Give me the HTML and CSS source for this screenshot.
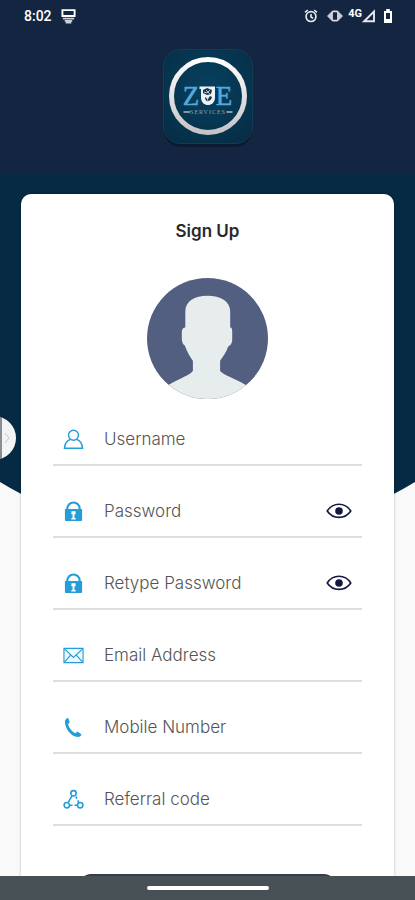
FILE: index.html
```html
<!DOCTYPE html>
<html lang="en">
<head>
<meta charset="utf-8">
<meta name="viewport" content="width=device-width, initial-scale=1">
<title>Sign Up - Zue Services</title>
<link rel="stylesheet" href="styles.css">
</head>
<body>
<svg class="sprite" aria-hidden="true">
  <symbol id="lock" viewBox="0 0 20 22">
    <path d="M3.500 9V8a6.500 6.500 0 0 1 13 0v1" fill="none" stroke="currentColor" stroke-width="2.200"/>
    <path d="M1 8.500h18V20a1 1 0 0 1-1 1H2a1 1 0 0 1-1-1z" fill="currentColor"/>
    <path d="M7.800 10.800h4.400v3h-1.200v4h1.200v1.500H7.800v-1.500H9v-4H7.800z" fill="#fff"/>
  </symbol>
  <symbol id="eye" viewBox="0 0 26 18">
    <path d="M1.200 9C7 0 19 0 24.800 9 19 17.500 7 17.500 1.200 9z" fill="none" stroke="currentColor" stroke-width="1.600" stroke-linejoin="round"/>
    <circle cx="13" cy="9" r="3.800" fill="currentColor"/>
  </symbol>
</svg>
<div class="screen">
  <div class="backdrop"></div>
  <header class="top">
    <div class="status">
      <div class="status-group">
        <span class="clock">8:02</span>
        <svg class="icon-notice" viewBox="0 0 16 16"><path d="M1.500 1.200h13v6.300h-13z" fill="none" stroke="#fff" stroke-width="2"/><path d="M2 10.200h12M4 12.700h8M5 14.500h6" stroke="#cbd0d9" stroke-width="1.800"/></svg>
      </div>
      <div class="status-group">
        <svg class="icon-alarm" viewBox="0 0 14 14"><circle cx="7" cy="7.600" r="4.900" fill="none" stroke="#e4e7ee" stroke-width="1.700"/><path d="M1 3.400 3.800 1M13 3.400 10.200 1M7 5v3l2 1.200" fill="none" stroke="#e4e7ee" stroke-width="1.600"/></svg>
        <svg class="icon-vibrate" viewBox="0 0 16 14"><path d="M4.500 2.500 0 7l4.500 4.500zM11.500 2.500 16 7l-4.500 4.500z" fill="#c7ccd6"/><rect x="5" y="2.400" width="6" height="9.200" rx="1.400" fill="#142541" stroke="#d8dce4" stroke-width="1.800"/></svg>
        <div class="signal">
          <span class="network">4G</span>
          <svg class="icon-signal" viewBox="0 0 14 14"><path d="M12 2.500V12.200H2.200z" fill="none" stroke="#e4e7ee" stroke-width="1.900"/></svg>
        </div>
        <svg class="icon-battery" viewBox="0 0 10 14"><path d="M3.200 0h3.600v2H9v12H1V2h2.200z" fill="#fff"/><path d="M3 4h4v6H3z" fill="#142541"/></svg>
      </div>
    </div>
    <svg class="logo" viewBox="0 0 92 100" role="img" aria-label="Zue Services">
      <defs>
        <radialGradient id="tile" cx=".5" cy=".4" r=".7"><stop offset="0" stop-color="#07415f"/><stop offset="1" stop-color="#062d45"/></radialGradient>
        <linearGradient id="ring" x1="0" y1="0" x2="0" y2="1"><stop offset="0" stop-color="#fff"/><stop offset="1" stop-color="#c5c3c7"/></linearGradient>
      </defs>
      <rect x="2" y="5" width="88" height="93" rx="17" fill="#0b1a31"/>
      <rect x="1.500" y=".5" width="89" height="94" rx="17" fill="url(#tile)" stroke="#123b55"/>
      <circle cx="46" cy="47" r="36.500" fill="none" stroke="url(#ring)" stroke-width="5"/>
      <g font-family="'Liberation Serif', serif" text-anchor="middle">
        <text x="29" y="55.500" font-size="27" fill="#55a8dd" stroke="#55a8dd" stroke-width=".5">Z</text>
        <text x="62" y="55.500" font-size="27" fill="#55a8dd" stroke="#55a8dd" stroke-width=".5">E</text>
        <text x="46" y="65" font-size="6" letter-spacing="1" fill="#8ba2b0">SERVICES</text>
      </g>
      <path d="M37.500 37.500H53v11c0 10-14 10-14 0V40h-1.500z" fill="#edf1f5"/>
      <path d="m41 41 4-2 5 2-1 4-4 1-4-2zM43 48c0 6 6 5 7 0l-2-1-2 3z" fill="#17334b"/>
      <path d="m42 43 3 1 3-3M44 41l4 4M45 49l1 3" stroke="#dce5ec" stroke-width=".8" fill="none"/>
      <path d="M21.500 63h6.500M64.500 63h6" stroke="#a7bac6" stroke-width="1.400"/>
    </svg>
  </header>
  <main class="card">
    <h1>Sign Up</h1>
    <svg class="avatar" viewBox="0 0 120 120" role="img" aria-label="Profile picture">
      <defs><clipPath id="round"><circle cx="60" cy="60" r="60"/></clipPath></defs>
      <g clip-path="url(#round)">
        <path d="M0 0h120v120H0z" fill="#535f80"/>
        <path d="M38 49V33c0-10 9-15.500 22-15.500S82.500 23 82.500 33v16c2 0 2 2 2 5v7c0 4-2 6-4 7-2 6-5 10-8 14v10c2 4 18 9 27 15v21H20v-21c9-6 24-11 25.500-15V82c-3-4-6-9-8-15-2-1-3-4-3-7v-6c0-3 1-5 3.500-5z" fill="#e7eced"/>
      </g>
    </svg>
    <form class="form">
      <div class="field">
        <svg class="field-icon" viewBox="0 0 22 22"><circle cx="11" cy="6.500" r="5.200" fill="none" stroke="currentColor" stroke-width="1.500"/><path d="M7.500 11C4 12 2 15 1.500 20.200h19C20 15 18 12 14.500 11" fill="none" stroke="currentColor" stroke-width="1.500"/></svg>
        <input type="text" placeholder="Username" aria-label="Username">
      </div>
      <div class="field">
        <svg class="field-icon"><use href="#lock"/></svg>
        <input type="password" placeholder="Password" aria-label="Password">
        <button class="reveal" type="button" aria-label="Show password"><svg class="eye"><use href="#eye"/></svg></button>
      </div>
      <div class="field">
        <svg class="field-icon"><use href="#lock"/></svg>
        <input type="password" placeholder="Retype Password" aria-label="Retype Password">
        <button class="reveal" type="button" aria-label="Show retyped password"><svg class="eye"><use href="#eye"/></svg></button>
      </div>
      <div class="field">
        <svg class="field-icon" viewBox="0 0 22 22"><path d="M1 3.500h20v15H1z" fill="#eef8fd" stroke="currentColor" stroke-width="1.200"/><path d="m1.500 4 9.500 9 9.500-9M1.500 18l6.500-7.500M20.500 18 14 10.500" fill="none" stroke="currentColor" stroke-width="1.200"/></svg>
        <input type="email" placeholder="Email Address" aria-label="Email Address">
      </div>
      <div class="field">
        <svg class="field-icon" viewBox="0 0 22 22"><path d="M5.500 1 7 5.500 5.300 7.500c1 4 4 7.500 7.700 9.500l2-1.700 4.300 2.700c.2 1.500-1.800 3-4 3C8.500 20.500 2 12 2 5c0-2 1.500-4 3.500-4z" fill="currentColor"/></svg>
        <input type="tel" placeholder="Mobile Number" aria-label="Mobile Number">
      </div>
      <div class="field">
        <svg class="field-icon" viewBox="0 0 22 22"><g fill="none" stroke="currentColor" stroke-width="1.700"><circle cx="11" cy="4.500" r="2.800"/><circle cx="4" cy="17" r="2.800"/><circle cx="18" cy="17" r="2.800"/><path d="m9.500 7-4 7M13.500 8l1 2M15.500 12l1 2M7 17h3M12 17h3"/></g></svg>
        <input type="text" placeholder="Referral code" aria-label="Referral code">
      </div>
      <button class="submit" type="submit" aria-label="Sign Up"></button>
    </form>
  </main>
  <button class="drawer" type="button" aria-label="Open panel"><svg class="chevron" viewBox="0 0 8 12"><path d="m2 1 4 5-4 5" fill="none" stroke="#cdd1d4" stroke-width="1.200"/></svg></button>
  <div class="gesture"><span class="pill"></span></div>
</div>
</body>
</html>
```
FILE: styles.css
```css
* { box-sizing: border-box; }

body {
  margin: 0;
  background: #f9f9fa;
  font-family: Inter, "Open Sans", sans-serif;
}

.sprite { position: absolute; width: 0; height: 0; }

.screen {
  position: relative;
  display: flex;
  flex-direction: column;
  height: 100vh;
  overflow: hidden;
}

.backdrop {
  position: absolute;
  inset: 0;
  background: #062a43;
  clip-path: circle(400px at 50% 140px);
}

.top {
  position: relative;
  display: flex;
  flex: none;
  flex-direction: column;
  align-items: center;
  gap: 17px;
  margin-bottom: 20px;
  padding-bottom: 25px;
  background: #142541;
}

.status {
  display: flex;
  align-self: stretch;
  align-items: center;
  justify-content: space-between;
  height: 32px;
  padding: 0 22px 0 24px;
  color: #fff;
}

.status-group { display: flex; align-items: center; gap: 9px; }
.clock { font: 500 14px Roboto, sans-serif; }
.icon-notice { width: 15px; height: 15px; }
.icon-alarm { width: 14px; height: 14px; }
.icon-vibrate { width: 16px; height: 14px; }
.icon-signal { width: 14px; height: 14px; }
.icon-battery { width: 10px; height: 14px; }
.signal { display: flex; align-items: center; margin: 0 -2px 0 -4px; }
.network { align-self: flex-start; font: 700 11px/10px Roboto, sans-serif; }

.logo { width: 92px; height: 100px; }

.card {
  position: relative;
  flex: none;
  margin: 0 21px;
  padding: 26px 32px 32px;
  border-radius: 10px;
  background: #fff;
  box-shadow: 0 0 3px #00000040;
  text-align: center;
}

h1 {
  margin: 0;
  color: #29292b;
  font-size: 17px;
  font-weight: 600;
  line-height: 22px;
}

.avatar { display: block; width: 121px; height: 121px; margin: 36px auto 15px; }

.form { display: flex; flex-direction: column; gap: 20px; }

.field {
  display: flex;
  align-items: center;
  height: 52px;
  padding: 0 10px;
  border-bottom: 2px solid #dedede;
}

.field-icon { flex: none; width: 21px; height: 21px; color: #249dd8; }

.field input {
  flex: 1;
  min-width: 0;
  margin-left: 20px;
  padding: 0;
  border: 0;
  outline: 0;
  background: none;
  color: #555;
  font: 300 17px/24px Inter, sans-serif;
}

.field input::placeholder { color: #555; opacity: 1; }

.reveal { display: flex; padding: 0; border: 0; background: none; color: #15173f; }
.eye { width: 26px; height: 18px; }

.submit {
  height: 48px;
  margin: 28px 26px 0;
  border: 0;
  border-radius: 12px;
  background: #353b50;
}

.drawer {
  position: absolute;
  top: 416px;
  left: -28px;
  display: flex;
  align-items: center;
  justify-content: flex-end;
  width: 44px;
  height: 44px;
  padding: 0 5px;
  border: 0;
  border-radius: 50%;
  background: linear-gradient(90deg, #8b8d90 30px, #f3f4f5 30px);
}

.chevron { width: 8px; height: 12px; }

.gesture {
  position: absolute;
  right: 0;
  bottom: 0;
  left: 0;
  display: flex;
  align-items: center;
  justify-content: center;
  height: 24px;
  background: #465055;
}

.pill { width: 122px; height: 4px; border-radius: 2px; background: #fff; }
```
